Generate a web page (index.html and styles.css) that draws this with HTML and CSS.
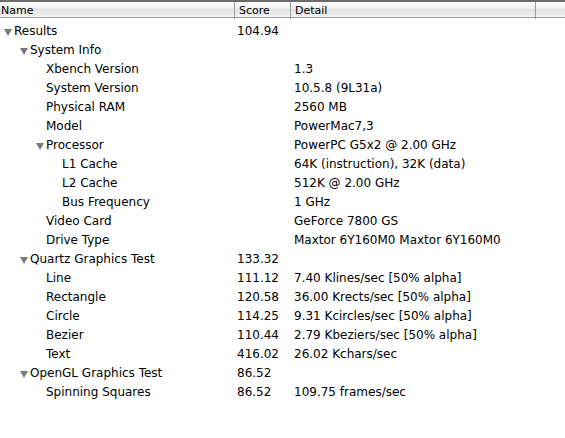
FILE: index.html
```html
<!DOCTYPE html>
<html>
<head>
<meta charset="utf-8">
<link rel="stylesheet" href="styles.css">
</head>
<body>
<div class="outline">
  <div class="header">
    <div class="hcell hname">Name</div>
    <div class="hcell hscore">Score</div>
    <div class="hcell hdetail">Detail</div>
    <div class="hcell hfill"></div>
  </div>
  <div class="rows">
    <div class="row"><div class="name l0"><span class="tri"></span>Results</div><div class="score">104.94</div><div class="detail"></div></div>
    <div class="row"><div class="name l1"><span class="tri"></span>System Info</div><div class="score"></div><div class="detail"></div></div>
    <div class="row"><div class="name l2">Xbench Version</div><div class="score"></div><div class="detail">1.3</div></div>
    <div class="row"><div class="name l2">System Version</div><div class="score"></div><div class="detail">10.5.8 (9L31a)</div></div>
    <div class="row"><div class="name l2">Physical RAM</div><div class="score"></div><div class="detail">2560 MB</div></div>
    <div class="row"><div class="name l2">Model</div><div class="score"></div><div class="detail">PowerMac7,3</div></div>
    <div class="row"><div class="name l2t"><span class="tri"></span>Processor</div><div class="score"></div><div class="detail">PowerPC G5x2 @ 2.00 GHz</div></div>
    <div class="row"><div class="name l3">L1 Cache</div><div class="score"></div><div class="detail">64K (instruction), 32K (data)</div></div>
    <div class="row"><div class="name l3">L2 Cache</div><div class="score"></div><div class="detail">512K @ 2.00 GHz</div></div>
    <div class="row"><div class="name l3">Bus Frequency</div><div class="score"></div><div class="detail">1 GHz</div></div>
    <div class="row"><div class="name l2">Video Card</div><div class="score"></div><div class="detail">GeForce 7800 GS</div></div>
    <div class="row"><div class="name l2">Drive Type</div><div class="score"></div><div class="detail">Maxtor 6Y160M0 Maxtor 6Y160M0</div></div>
    <div class="row"><div class="name l1"><span class="tri"></span>Quartz Graphics Test</div><div class="score">133.32</div><div class="detail"></div></div>
    <div class="row"><div class="name l2">Line</div><div class="score">111.12</div><div class="detail">7.40 Klines/sec [50% alpha]</div></div>
    <div class="row"><div class="name l2">Rectangle</div><div class="score">120.58</div><div class="detail">36.00 Krects/sec [50% alpha]</div></div>
    <div class="row"><div class="name l2">Circle</div><div class="score">114.25</div><div class="detail">9.31 Kcircles/sec [50% alpha]</div></div>
    <div class="row"><div class="name l2">Bezier</div><div class="score">110.44</div><div class="detail">2.79 Kbeziers/sec [50% alpha]</div></div>
    <div class="row"><div class="name l2">Text</div><div class="score">416.02</div><div class="detail">26.02 Kchars/sec</div></div>
    <div class="row"><div class="name l1"><span class="tri"></span>OpenGL Graphics Test</div><div class="score">86.52</div><div class="detail"></div></div>
    <div class="row"><div class="name l2">Spinning Squares</div><div class="score">86.52</div><div class="detail">109.75 frames/sec</div></div>
  </div>
</div>
</body>
</html>
```
FILE: styles.css
```css
html, body {
  margin: 0;
  padding: 0;
  background: #ffffff;
}
body {
  font-family: "DejaVu Sans", "Liberation Sans", sans-serif;
  color: #000;
  width: 565px;
  height: 438px;
  overflow: hidden;
}
.outline {
  display: flex;
  flex-direction: column;
}
.header {
  display: grid;
  grid-template-columns: 234px 56px 245px 1fr;
  height: 15px;
  border-top: 2px solid #6b6b6b;
  border-bottom: 1px solid #9a9a9a;
  background: linear-gradient(#ffffff 0%, #f3f3f3 35%, #e2e2e2 55%, #ececec 80%, #f6f6f6 100%);
  font-size: 11px;
}
.hcell {
  line-height: 17px;
  padding-left: 4px;
  white-space: nowrap;
}
.hname {
  padding-left: 1px;
}
.hscore, .hdetail, .hfill {
  border-left: 1px solid #9a9a9a;
}
.rows {
  padding-top: 4px;
}
.row {
  display: grid;
  grid-template-columns: 234px 56px 1fr;
  height: 19px;
  line-height: 19px;
  font-size: 12px;
  white-space: nowrap;
}
.score {
  padding-left: 3px;
}
.detail {
  padding-left: 4px;
}
.name {
  display: flex;
  align-items: center;
}
.l0 { padding-left: 4px; }
.l1 { padding-left: 20px; }
.l2 { padding-left: 46px; }
.l2t { padding-left: 36px; }
.l3 { padding-left: 62px; }
.tri {
  width: 0;
  height: 0;
  border-left: 4px solid transparent;
  border-right: 4px solid transparent;
  border-top: 7px solid #7a7a7a;
  margin-right: 2px;
  margin-top: 1px;
}
```
